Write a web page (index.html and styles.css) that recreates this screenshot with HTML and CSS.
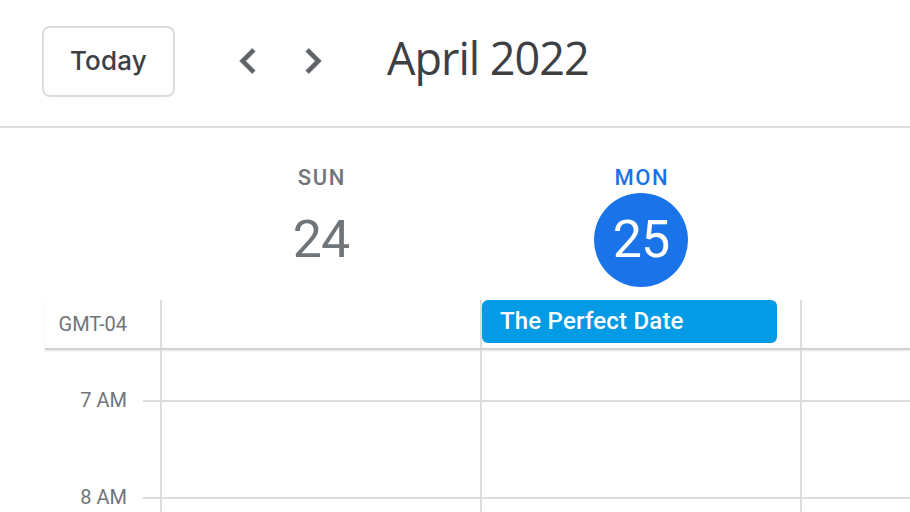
FILE: index.html
```html
<!DOCTYPE html>
<html lang="en">
<head>
<meta charset="utf-8">
<title>Calendar</title>
<link rel="stylesheet" href="styles.css">
</head>
<body>
<header class="topbar">
  <button class="today-btn">Today</button>
  <svg class="nav-icon nav-prev" viewBox="0 0 24 24" width="50" height="50" aria-hidden="true"><path d="M15.41 7.41L14 6l-6 6 6 6 1.41-1.41L10.83 12z"/></svg>
  <svg class="nav-icon nav-next" viewBox="0 0 24 24" width="50" height="50" aria-hidden="true"><path d="M10 6L8.59 7.41 13.17 12l-4.58 4.59L10 18l6-6z"/></svg>
  <h1 class="title">April 2022</h1>
</header>

<section class="day-head">
  <div class="gutter"></div>
  <div class="day">
    <div class="dow">SUN</div>
    <div class="dnum">24</div>
  </div>
  <div class="day day-today">
    <div class="dow">MON</div>
    <div class="dnum">25</div>
  </div>
  <div class="day"></div>
</section>

<section class="allday">
  <div class="gutter tz">GMT-04</div>
  <div class="col"></div>
  <div class="col"><div class="event">The Perfect Date</div></div>
  <div class="col"></div>
</section>

<section class="grid">
  <div class="row row-partial">
    <div class="label"></div>
    <div class="tick"></div>
    <div class="cell"></div>
    <div class="cell"></div>
    <div class="cell"></div>
  </div>
  <div class="row row-hour">
    <div class="label"><span>7 AM</span></div>
    <div class="tick"></div>
    <div class="cell"></div>
    <div class="cell"></div>
    <div class="cell"></div>
  </div>
  <div class="row row-hour row-last">
    <div class="label"><span>8 AM</span></div>
    <div class="tick"></div>
    <div class="cell"></div>
    <div class="cell"></div>
    <div class="cell"></div>
  </div>
</section>
</body>
</html>
```

FILE: styles.css
```css
* { box-sizing: border-box; }

html, body {
  margin: 0;
  padding: 0;
  background: #ffffff;
  overflow: hidden;
}

body {
  width: 910px;
  height: 512px;
  font-family: Roboto, "Noto Sans", sans-serif;
  color: #3c4043;
}

/* ---------- top bar ---------- */
.topbar {
  height: 128px;
  display: flex;
  align-items: center;
  padding: 0 0 4px 42px;
  border-bottom: 2px solid #dadce0;
}

.today-btn {
  width: 133px;
  height: 71px;
  border: 2px solid #dadce0;
  border-radius: 8px;
  background: #fff;
  font-family: Inter, "Open Sans", sans-serif;
  font-weight: 500;
  font-size: 26px;
  letter-spacing: 0.2px;
  color: #3c4043;
  padding: 0;
  line-height: 1;
}

.nav-icon {
  fill: #5f6368;
  stroke: #5f6368;
  stroke-width: 0.35;
  stroke-linejoin: round;
  flex: none;
}

.nav-prev { margin-left: 48px; }
.nav-next { margin-left: 15px; }

.title {
  margin: -7px 0 0 49px;
  font-family: "Open Sans", sans-serif;
  font-weight: 400;
  font-size: 45px;
  line-height: 1;
  letter-spacing: -1px;
  color: #3c4043;
}

/* ---------- day header ---------- */
.day-head {
  height: 172px;
  display: grid;
  grid-template-columns: 160px 320px 320px 1fr;
}

.day {
  display: flex;
  flex-direction: column;
  align-items: center;
  padding-top: 36px;
  padding-left: 2px;
}

.dow {
  font-size: 22px;
  font-weight: 500;
  line-height: 28px;
  letter-spacing: 1.6px;
  color: #70757a;
  margin-right: -1.6px;
}

.dnum {
  width: 94px;
  height: 94px;
  margin-top: 1px;
  border-radius: 50%;
  display: flex;
  align-items: center;
  justify-content: center;
  font-size: 52px;
  font-weight: 400;
  letter-spacing: -1px;
  color: #70757a;
  line-height: 1;
}

.day-today .dow { color: #1a73e8; }
.day-today .dnum {
  background: #1a73e8;
  color: #ffffff;
}

/* ---------- all-day row ---------- */
.allday {
  height: 50px;
  display: grid;
  grid-template-columns: 115px 320px 320px 1fr;
  margin-left: 45px;
  border-bottom: 2px solid #d0d0d0;
  box-shadow: 0 1px 2px rgba(0, 0, 0, 0.1);
}

.tz {
  display: flex;
  align-items: center;
  justify-content: flex-end;
  padding-right: 33px;
  font-size: 20px;
  color: #70757a;
}

.col {
  border-left: 2px solid #dadce0;
}

.event {
  width: 295px;
  height: 43px;
  background: #039be5;
  border-radius: 6px;
  color: #ffffff;
  font-size: 24px;
  font-weight: 500;
  line-height: 43px;
  letter-spacing: 0.2px;
  padding-left: 18px;
}

/* ---------- time grid ---------- */
.grid {
  display: flex;
  flex-direction: column;
}

.row {
  display: grid;
  grid-template-columns: 143px 17px 320px 320px 1fr;
}

.row-partial { height: 50px; }
.row-hour { height: 97px; }
.row-last { height: 15px; }

.row-hour .tick,
.row-hour .cell {
  border-top: 2px solid #dadce0;
}

.cell {
  border-left: 2px solid #dadce0;
}

.label {
  text-align: right;
  padding-right: 16px;
  font-size: 20px;
  color: #70757a;
}

.label span {
  display: block;
  line-height: 24px;
  margin-top: -12px;
}
```
